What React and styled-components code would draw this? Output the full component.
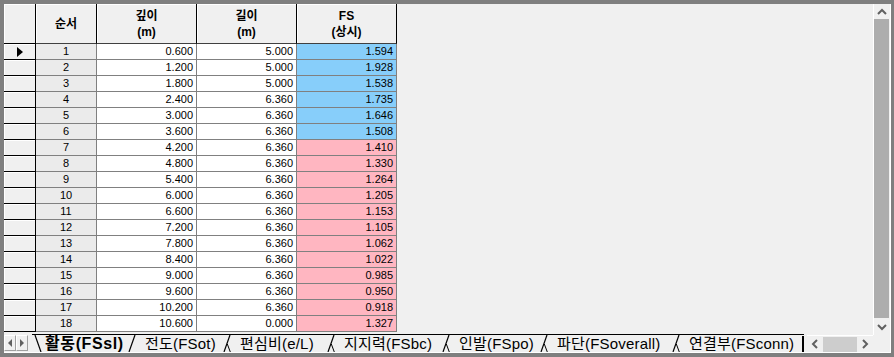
import styled, { createGlobalStyle } from "styled-components";

const GlobalStyle = createGlobalStyle`
  html, body {
    margin: 0;
    padding: 0;
    background: #f0f0f0;
  }
`;

const rows = [
  [1, "0.600", "5.000", "1.594"],
  [2, "1.200", "5.000", "1.928"],
  [3, "1.800", "5.000", "1.538"],
  [4, "2.400", "6.360", "1.735"],
  [5, "3.000", "6.360", "1.646"],
  [6, "3.600", "6.360", "1.508"],
  [7, "4.200", "6.360", "1.410"],
  [8, "4.800", "6.360", "1.330"],
  [9, "5.400", "6.360", "1.264"],
  [10, "6.000", "6.360", "1.205"],
  [11, "6.600", "6.360", "1.153"],
  [12, "7.200", "6.360", "1.105"],
  [13, "7.800", "6.360", "1.062"],
  [14, "8.400", "6.360", "1.022"],
  [15, "9.000", "6.360", "0.985"],
  [16, "9.600", "6.360", "0.950"],
  [17, "10.200", "6.360", "0.918"],
  [18, "10.600", "0.000", "1.327"],
];

const headers = ["순서", "깊이\n(m)", "길이\n(m)", "FS\n(상시)"];

// 시트 탭 (폭은 원본 위치에 맞춤)
const tabs = [
  { label: "활동(FSsl)", w: 94, active: true },
  { label: "전도(FSot)", w: 95 },
  { label: "편심비(e/L)", w: 104 },
  { label: "지지력(FSbc)", w: 115 },
  { label: "인발(FSpo)", w: 98 },
  { label: "파단(FSoverall)", w: 132 },
  { label: "연결부(FSconn)", w: 130 },
];

function Chevron({ dir }) {
  const pts = {
    up: "1,6 5,2 9,6",
    down: "1,2 5,6 9,2",
    left: "6,1 2,5 6,9",
    right: "2,1 6,5 2,9",
  }[dir];
  const vertical = dir === "up" || dir === "down";
  return (
    <svg width={vertical ? 10 : 8} height={vertical ? 8 : 10}>
      <polyline points={pts} fill="none" stroke="#606060" strokeWidth="2" />
    </svg>
  );
}

function TabEdge({ kind }) {
  if (kind === "start") {
    return (
      <svg width="8" height="17">
        <line x1="1" y1="0" x2="7" y2="17" stroke="#000" strokeWidth="1.2" />
      </svg>
    );
  }
  return (
    <svg width="12" height="17">
      <line x1="1" y1="17" x2="7" y2="0" stroke="#000" strokeWidth="1.2" />
      {kind === "between" && (
        <line x1="4.3" y1="9" x2="7.3" y2="17" stroke="#000" strokeWidth="1" />
      )}
    </svg>
  );
}

export default function App() {
  return (
    <>
      <GlobalStyle />
      <Window>
        <Inner>
          <LeftPane>
            <Viewport>
              <Sheet>
                <CornerCell />
                {headers.map((h) => (
                  <HeaderCell key={h}>{h}</HeaderCell>
                ))}
                {rows.map(([no, depth, len, fs]) => (
                  <Row key={no}>
                    <IndicatorCell>
                      {no === 1 && (
                        <svg width="6" height="10">
                          <polygon points="0,0 6,5 0,10" fill="#000" />
                        </svg>
                      )}
                    </IndicatorCell>
                    <NumCell>{no}</NumCell>
                    <ValueCell>{depth}</ValueCell>
                    <ValueCell>{len}</ValueCell>
                    <ValueCell $bg={parseFloat(fs) >= 1.5 ? "#87cefa" : "#ffb6c1"}>
                      {fs}
                    </ValueCell>
                  </Row>
                ))}
              </Sheet>
            </Viewport>
            <BottomBar>
              <NavButtons>
                <NavButton>
                  <Arrow $dir="left" />
                </NavButton>
                <NavButton>
                  <Arrow $dir="right" />
                </NavButton>
              </NavButtons>
              <TabStrip>
                {tabs.map((t, i) => (
                  <Tab key={t.label} $w={t.w}>
                    <TabEdge kind={t.active ? "start" : i === 1 ? "after" : "between"} />
                    <TabLabel $active={t.active}>{t.label}</TabLabel>
                  </Tab>
                ))}
                <EndMark />
              </TabStrip>
              <HScroll>
                <ArrowBox $w={16}>
                  <Chevron dir="left" />
                </ArrowBox>
                <HThumb />
                <ArrowBox $w={16}>
                  <Chevron dir="right" />
                </ArrowBox>
              </HScroll>
            </BottomBar>
          </LeftPane>
          <RightPane>
            <VScroll>
              <ArrowBox $h={15}>
                <Chevron dir="up" />
              </ArrowBox>
              <VThumb />
              <ArrowBox $h={17}>
                <Chevron dir="down" />
              </ArrowBox>
            </VScroll>
            <ScrollCorner />
          </RightPane>
        </Inner>
      </Window>
    </>
  );
}

const Window = styled.div`
  width: 894px;
  height: 357px;
  box-sizing: border-box;
  border-style: solid;
  border-color: #7f7f7f;
  border-width: 4px 3px 4px 4px;
  background: #f0f0f0;
  display: flex;
  font-family: "Liberation Sans", "Noto Sans CJK KR", sans-serif;
  color: #000;
`;

const Inner = styled.div`
  flex: 1;
  display: flex;
  border-right: 1px solid #ffffff;
  border-bottom: 1px solid #ffffff;
`;

const LeftPane = styled.div`
  width: 869px;
  display: flex;
  flex-direction: column;
`;

const Viewport = styled.div`
  height: 330px;
  overflow: hidden;
`;

const Sheet = styled.div`
  display: grid;
  grid-template-columns: 32px 61px 100px 100px 100px;
  grid-template-rows: 40px;
  grid-auto-rows: 16px;
  width: max-content;
`;

const Row = styled.div`
  display: contents;
`;

const CornerCell = styled.div`
  box-sizing: border-box;
  background: #f0f0f0;
  border-right: 1px solid #000;
  border-bottom: 1px solid #000;
  box-shadow: inset 1px 1px 0 #ffffff;
`;

const HeaderCell = styled.div`
  box-sizing: border-box;
  background: #f0f0f0;
  border-right: 1px solid #000;
  border-bottom: 1px solid #404040;
  box-shadow: inset 1px 1px 0 #ffffff;
  display: flex;
  align-items: center;
  justify-content: center;
  text-align: center;
  white-space: pre-line;
  font-size: 12px;
  font-weight: 700;
  line-height: 16px;
`;

const IndicatorCell = styled.div`
  box-sizing: border-box;
  background: #f0f0f0;
  border-right: 1px solid #000;
  border-bottom: 1px solid #000;
  box-shadow: inset 1px 1px 0 #ffffff;
  display: flex;
  align-items: center;
  justify-content: center;
`;

const NumCell = styled.div`
  box-sizing: border-box;
  background: #ebebeb;
  border-right: 1px solid #808080;
  border-bottom: 1px solid #808080;
  text-align: center;
  font-size: 11px;
  line-height: 15px;
`;

const ValueCell = styled.div`
  box-sizing: border-box;
  background: ${(p) => p.$bg || "#ffffff"};
  border-right: 1px solid #808080;
  border-bottom: 1px solid #808080;
  text-align: right;
  padding-right: 3px;
  font-size: 11px;
  line-height: 15px;
`;

const BottomBar = styled.div`
  height: 18px;
  display: flex;
  align-items: flex-start;
`;

const NavButtons = styled.div`
  display: flex;
  width: 28px;
  height: 17px;
  margin-top: 1px;
`;

const NavButton = styled.div`
  box-sizing: border-box;
  width: 12px;
  height: 16px;
  border: 1px solid #a0a0a0;
  border-top-color: #ffffff;
  border-left-color: #ffffff;
  display: flex;
  align-items: center;
  justify-content: center;
`;

const Arrow = styled.div`
  width: 0;
  height: 0;
  border-top: 4px solid transparent;
  border-bottom: 4px solid transparent;
  ${(p) =>
    p.$dir === "left"
      ? "border-right: 4px solid #606060;"
      : "border-left: 4px solid #606060;"}
`;

const TabStrip = styled.div`
  flex: 1;
  display: flex;
  height: 18px;
  box-sizing: border-box;
  border-top: 1px solid #000;
  padding-left: 2px;
  margin-left: 4px;
`;

const Tab = styled.div`
  width: ${(p) => p.$w}px;
  flex-shrink: 0;
  display: flex;
  align-items: center;
  height: 17px;
  overflow: hidden;
`;

const TabLabel = styled.span`
  font-size: ${(p) => (p.$active ? 16 : 15)}px;
  line-height: 17px;
  font-weight: ${(p) => (p.$active ? 700 : 400)};
  letter-spacing: ${(p) => (p.$active ? 0.6 : 0.2)}px;
  white-space: nowrap;
  padding-left: ${(p) => (p.$active ? 3 : 5)}px;
`;

const EndMark = styled.div`
  width: 2px;
  height: 16px;
  margin-top: 1px;
  background: #000;
`;

const HScroll = styled.div`
  box-sizing: border-box;
  width: 66px;
  height: 17px;
  margin-top: 1px;
  margin-left: 3px;
  border-top: 1px solid #ffffff;
  display: flex;
`;

const ArrowBox = styled.div`
  flex-shrink: 0;
  width: ${(p) => (p.$w ? `${p.$w}px` : "auto")};
  height: ${(p) => (p.$h ? `${p.$h}px` : "auto")};
  display: flex;
  align-items: center;
  justify-content: center;
`;

const HThumb = styled.div`
  width: 34px;
  margin: 1px 0 0;
  background: #cdcdcd;
`;

const RightPane = styled.div`
  width: 17px;
  display: flex;
  flex-direction: column;
`;

const VScroll = styled.div`
  box-sizing: border-box;
  height: 331px;
  border-left: 1px solid #ffffff;
  display: flex;
  flex-direction: column;
`;

const VThumb = styled.div`
  flex: 1;
  margin-right: 1px;
  background: #adadad;
`;

const ScrollCorner = styled.div`
  flex: 1;
  background: #f0f0f0;
`;
